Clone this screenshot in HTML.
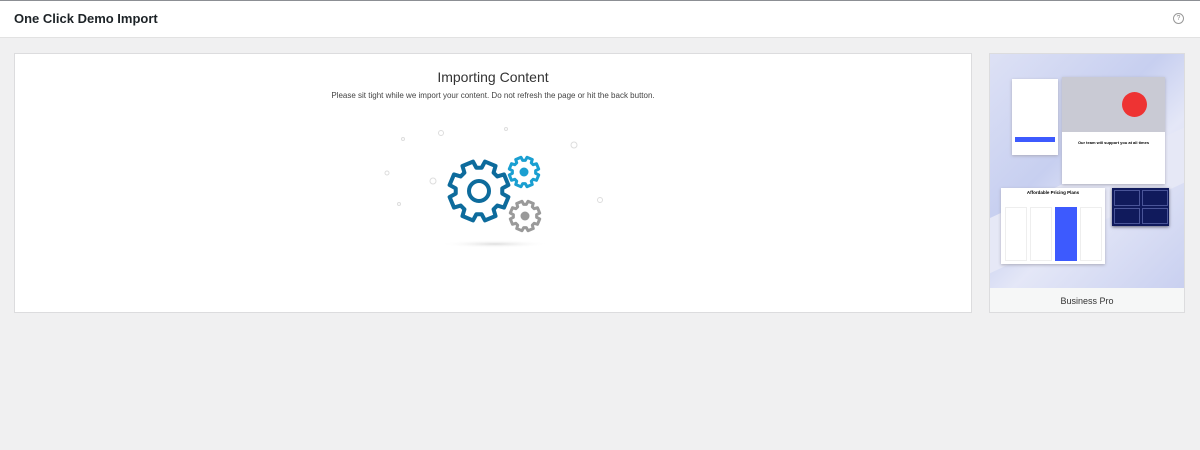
<!DOCTYPE html>
<html><head><style>
body{margin:0;width:1200px;height:450px;background:#f0f0f1;font-family:"Liberation Sans",sans-serif;overflow:hidden;position:relative}
.hdr{position:absolute;left:0;top:0;width:1200px;height:38px;background:#fff;border-top:1px solid #8c8f94;border-bottom:1px solid #e2e2e2;box-sizing:border-box}
.hdr h1{margin:0;position:absolute;left:14px;top:10px;font-size:13px;font-weight:bold;color:#1d2327}
.help{position:absolute;right:16px;top:12px;width:9px;height:9px;border:1px solid #999;border-radius:50%;font-size:7px;color:#888;text-align:center;line-height:9px}
.main{position:absolute;left:14px;top:53px;width:958px;height:260px;background:#fff;border:1px solid #dcdcde;box-sizing:border-box;text-align:center}
.main h2{margin:0;position:absolute;top:15px;width:100%;font-size:14px;font-weight:normal;color:#333}
.main p{margin:0;position:absolute;top:37px;width:100%;font-size:8px;color:#444}
.side{position:absolute;left:989px;top:53px;width:196px;height:260px;background:#f6f7f7;border:1px solid #dcdcde;box-sizing:border-box}
.shot{position:absolute;left:0;top:0;width:194px;height:234px;background:linear-gradient(135deg,#dde1f5,#c7cff0 40%,#e4e7f7 60%,#c9d0f0);overflow:hidden}
.lab{position:absolute;top:242px;width:100%;text-align:center;font-size:9px;color:#333}
.col{position:absolute;top:19px;width:22px;height:54px;background:#fff;border:1px solid #eee;box-sizing:border-box}
.db{position:absolute;width:26px;height:16px;border:1px solid #4a5599;box-sizing:border-box}
</style></head><body>
<div class="hdr"><h1>One Click Demo Import</h1><div class="help">?</div></div>
<div class="main">
<h2>Importing Content</h2>
<p>Please sit tight while we import your content. Do not refresh the page or hit the back button.</p>
<svg style="position:absolute;left:0;top:0" width="958" height="260" viewBox="14 53 958 260">
<defs>
<polygon id="gear" vector-effect="non-scaling-stroke" stroke-linejoin="round" points=".750,-.215 .982,-.191 .982,.191 .750,.215 .682,.378 .829,.559 .559,.829 .378,.682 .215,.750 .191,.982 -.191,.982 -.215,.750 -.378,.682 -.559,.829 -.829,.559 -.682,.378 -.750,.215 -.982,.191 -.982,-.191 -.750,-.215 -.682,-.378 -.829,-.559 -.559,-.829 -.378,-.682 -.215,-.750 -.191,-.982 .191,-.982 .215,-.750 .378,-.682 .559,-.829 .829,-.559 .682,-.378"/>
<radialGradient id="sh"><stop offset="0" stop-color="#ddd"/><stop offset="1" stop-color="#fff" stop-opacity="0"/></radialGradient>
</defs>
<ellipse cx="494" cy="243" rx="55" ry="4" fill="url(#sh)"/>
<g fill="none" stroke="#ddd" stroke-width="1"><circle cx="402" cy="138" r="1.5"/><circle cx="440" cy="132" r="2.5"/><circle cx="386" cy="172" r="2"/><circle cx="432" cy="180" r="3"/><circle cx="599" cy="199" r="2.5"/><circle cx="505" cy="128" r="1.5"/><circle cx="398" cy="203" r="1.5"/><circle cx="573" cy="144" r="3"/></g>
<use href="#gear" fill="#fff" stroke="#0d6b9c" stroke-width="4" transform="translate(478,190) rotate(22.5) scale(30)"/>
<circle cx="478" cy="190" r="10" fill="none" stroke="#0d6b9c" stroke-width="4"/>
<use href="#gear" fill="#fff" stroke="#1a9fd1" stroke-width="3" transform="translate(523,171) rotate(22.5) scale(15)"/>
<circle cx="523" cy="171" r="4.5" fill="#1a9fd1"/>
<use href="#gear" fill="#fff" stroke="#9a9a9a" stroke-width="3" transform="translate(524,215) rotate(22.5) scale(15)"/>
<circle cx="524" cy="215" r="4.5" fill="#9a9a9a"/>
</svg>
</div>
<div class="side"><div class="shot">
<div style="position:absolute;left:-30px;top:120px;width:260px;height:50px;background:#e6e8f6;transform:rotate(-25deg)"></div>
<div style="position:absolute;left:22px;top:25px;width:46px;height:76px;background:#fff;box-shadow:0 1px 3px #aab"><div style="position:absolute;left:3px;top:58px;width:40px;height:5px;background:#3d5afe"></div></div>
<div style="position:absolute;left:72px;top:23px;width:103px;height:107px;background:#fff;box-shadow:0 1px 3px #aab"><div style="height:55px;background:#c9cad4"></div><div style="position:absolute;left:60px;top:15px;width:25px;height:25px;border-radius:50%;background:#e33"></div><div style="position:absolute;top:63px;width:100%;text-align:center;font-size:4px;font-weight:bold">Our team will support you at all times</div></div>
<div style="position:absolute;left:11px;top:134px;width:104px;height:76px;background:#fff;box-shadow:0 1px 3px #aab"><div style="text-align:center;font-size:4.5px;font-weight:bold;padding-top:2px">Affordable Pricing Plans</div>
<div class="col" style="left:4px"></div><div class="col" style="left:29px"></div><div class="col" style="left:54px;background:#3d5afe;border:0"></div><div class="col" style="left:79px"></div></div>
<div style="position:absolute;left:122px;top:134px;width:57px;height:38px;background:#101a5c;box-shadow:0 1px 3px #667">
<div class="db" style="left:2px;top:2px"></div><div class="db" style="left:30px;top:2px"></div><div class="db" style="left:2px;top:20px"></div><div class="db" style="left:30px;top:20px"></div></div>
</div><div class="lab">Business Pro</div></div>
</body></html>
